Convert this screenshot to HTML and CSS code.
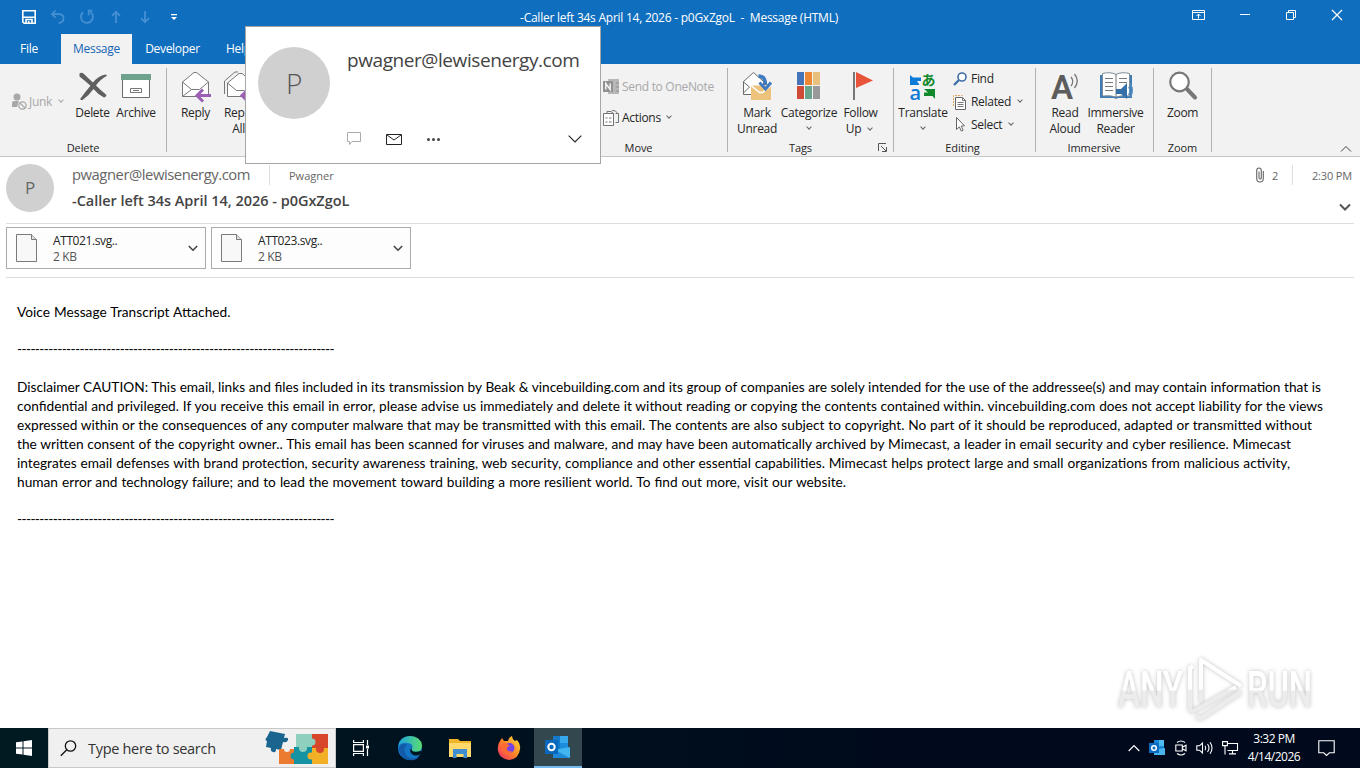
FILE: index.html
```html
<!DOCTYPE html>
<html lang="en">
<head>
  <meta charset="UTF-8">
  <meta name="viewport" content="width=device-width, initial-scale=1.0">
  <title>-Caller left 34s April 14, 2026 - p0GxZgoL - Message (HTML)</title>
  <link rel="stylesheet" href="styles.css">
</head>
<body>

  <div class="window">
    <header class="titlebar">
      <div class="quick-access">
        <svg width="16" height="16" viewBox="0 0 16 16" fill="none" stroke="#fff" stroke-width="1.6"><path d="M1.8 1.8h12.4v12.4H3.2l-1.4-1.4zM2 8.2h12"/><path d="M5 14v-3.5h6V14M7.7 12v2"/></svg>
        <svg width="16" height="16" viewBox="0 0 16 16" fill="none" stroke="#4490d3" stroke-width="1.8"><path d="M5.5 1.5L2 5.2l3.7 3.5M2.2 5.2h6.5c3 0 4.8 1.7 4.8 4.2 0 2.3-1.8 4.2-4.8 4.6"/></svg>
        <svg width="16" height="16" viewBox="0 0 16 16" fill="none" stroke="#4490d3" stroke-width="1.8"><path d="M4 3.3a6 6 0 1 0 7.6-.2M13.5 1.6h-3.8v4.6"/></svg>
        <svg width="16" height="16" viewBox="0 0 16 16" fill="none" stroke="#4490d3" stroke-width="1.8"><path d="M8 14V3M4 6.8L8 2.8l4 4"/></svg>
        <svg width="16" height="16" viewBox="0 0 16 16" fill="none" stroke="#4490d3" stroke-width="1.8"><path d="M8 2v11M4 9.2l4 4 4-4"/></svg>
        <svg width="16" height="16" viewBox="0 0 16 16" fill="#fff"><path d="M5 5h6v1.3H5zM5 8h6l-3 3z"/></svg>
      </div>
      <div class="title">-Caller left 34s April 14, 2026 - p0GxZgoL&nbsp; -&nbsp; Message (HTML)</div>
      <div class="window-buttons">
        <svg width="46" height="30" viewBox="0 0 46 30" fill="none" stroke="#fff"><path d="M16.500 10.500h12v9h-12zM16.500 12.500h12M22.500 18.500v-4M20.500 16l2-2 2 2"/></svg>
        <svg width="46" height="30" viewBox="0 0 46 30" fill="none" stroke="#fff"><path d="M18 14.500h10"/></svg>
        <svg width="46" height="30" viewBox="0 0 46 30" fill="none" stroke="#fff"><path d="M18.500 12.500h7v7h-7zM20.500 12v-1.500h7v7H26"/></svg>
        <svg width="46" height="30" viewBox="0 0 46 30" fill="none" stroke="#fff" stroke-width="1.2"><path d="M18 10l10 10M28 10L18 20"/></svg>
      </div>
    </header>

    <nav class="tabs">
      <span class="tab tab-file">File</span>
      <span class="tab tab-active">Message</span>
      <span class="tab tab-dev">Developer</span>
      <span class="tab tab-help">Help</span>
    </nav>

    <div class="ribbon">
      <section class="group group-delete">
        <div class="tools">
          <div class="junk">
            <svg width="17" height="18" viewBox="0 0 17 18"><circle cx="6" cy="4" r="3.500" fill="#a8a8a8"/><path d="M1 14V10q0-2 2-2h5l-2 6z" fill="#a8a8a8"/><circle cx="11.500" cy="12.500" r="3.700" fill="#f2f2f2" stroke="#a8a8a8" stroke-width="1.300"/><path d="M9 10l5 5" stroke="#a8a8a8" stroke-width="1.300"/></svg>
            <span>Junk</span>
            <i class="caret"></i>
          </div>
          <div class="tool w-delete">
            <svg width="32" height="32" viewBox="0 0 32 32" fill="#5f5f5f"><path d="M2.500 3.500Q4.500 2 7 4q5 5 9 8.500Q21 6 28.500 4.500q2 0 1 1.500-7 4-10.500 9.500 5 5 10.500 9.500-.5 2-2.500 2.500-6-3-10.500-8.500-5 7-11 11-3 .5-2-1.500Q9 21 13.500 15.800 7 10 2.500 6.500z"/></svg>
            <span>Delete</span>
          </div>
          <div class="tool w-archive">
            <svg width="32" height="32" viewBox="0 0 32 32"><path d="M2.500 9.500h27v18h-27z" fill="#fff" stroke="#6b6b6b"/><path d="M1 4h30v6H1z" fill="#6fa28d"/><path d="M10.500 18.500h11v4h-11z" fill="#fff" stroke="#777"/><path d="M13 20.500h6" stroke="#777"/></svg>
            <span>Archive</span>
          </div>
        </div>
        <h2>Delete</h2>
      </section>

      <section class="group group-respond">
        <div class="tools">
          <div class="tool w-reply">
            <svg width="32" height="32" viewBox="0 0 32 32"><path d="M2.500 12L14 2.500h2.500L28.500 12v14.500h-26z" fill="#fff" stroke="#777"/><path d="M2.500 12l9 7.500h8l9-7.500M11.500 19.500l-9 7" fill="none" stroke="#777"/><path d="M31 25.500H17M23 19.500l-6 6 6 6" fill="none" stroke="#9b5fb5" stroke-width="3"/></svg>
            <span>Reply</span>
          </div>
          <div class="tool w-replyall">
            <svg width="32" height="32" viewBox="0 0 32 32"><path d="M1.500 24V11L12 2h3" fill="none" stroke="#777"/><path d="M4.500 13L16 3.500h3L31 13v13.500H4.500z" fill="#fff" stroke="#777"/><path d="M4.500 13l9 7.500h8" fill="none" stroke="#777"/><path d="M31 25.500H19M25 19.500l-6 6 6 6" fill="none" stroke="#9b5fb5" stroke-width="3"/></svg>
            <span>Reply<br>All</span>
          </div>
        </div>
        <h2></h2>
      </section>

      <section class="group group-move">
        <div class="stack">
          <div class="row disabled">
            <svg width="17" height="16" viewBox="0 0 17 16"><path d="M5 0h11v15H5z" fill="#b8b8b8"/><path d="M13 4h3M13 8h3M13 12h3" stroke="#8f8f8f"/><path d="M0 2h10v11H0z" fill="#929292"/><path d="M2.800 10.500v-6l4.400 6v-6" fill="none" stroke="#f2f2f2" stroke-width="1.500"/></svg>
            <span>Send to OneNote</span>
          </div>
          <div class="row">
            <svg width="17" height="16" viewBox="0 0 17 16" fill="none" stroke="#737373"><path d="M.5 3.500h10v12H.5z" fill="#fff"/><path d="M2.500 8h2M2.500 12h2M6 8h2.500M6 12h2.500"/><path d="M4 3V1.500h4l3 2.500M9 .500q5 0 5 3M12.500 12.500h3v-9h-3"/></svg>
            <span>Actions</span>
            <i class="caret"></i>
          </div>
        </div>
        <h2>Move</h2>
      </section>

      <section class="group group-tags">
        <div class="tools">
          <div class="tool w-mark">
            <svg width="32" height="32" viewBox="0 0 32 32"><path d="M2.500 11.500L12.500 2.500l10 9v13h-20z" fill="#fff" stroke="#6b6b6b"/><path d="M2.500 12l6 5-6 6" fill="none" stroke="#6b6b6b"/><path d="M10 15.500h20V30H10z" fill="#ecc27c"/><path d="M10 15.500l8.500 7h3l8.500-7" fill="none" stroke="#fff" stroke-width="1.600"/><path d="M17.500 6q7 0 7 9" fill="none" stroke="#3e7ac1" stroke-width="3.500"/><path d="M18.500 12.500l6 6.500 5.500-6.500" fill="none" stroke="#3e7ac1" stroke-width="3"/></svg>
            <span>Mark<br>Unread</span>
          </div>
          <div class="tool w-cat">
            <svg width="32" height="32" viewBox="0 0 32 32"><path d="M4 2h7v13H4z" fill="#4674b9"/><path d="M12 2h7v13h-7z" fill="#ed8733"/><path d="M20 2h7v13h-7z" fill="#e8c07b"/><path d="M4 16h7v13H4z" fill="#cf4b37"/><path d="M12 16h7v13h-7z" fill="#69a58d"/><path d="M20 16h7v13h-7z" fill="#999"/></svg>
            <span>Categorize</span><i class="caret"></i>
          </div>
          <div class="tool w-follow">
            <svg width="32" height="32" viewBox="0 0 32 32"><path d="M9 2v28" stroke="#777" stroke-width="2"/><path d="M11 2l17 8.500L11 18z" fill="#e8543a"/></svg>
            <span>Follow<br>Up <i class="caret"></i></span>
          </div>
        </div>
        <h2>Tags</h2>
        <svg class="launcher" width="9" height="9" viewBox="0 0 9 9" fill="none" stroke="#555"><path d="M.5 8V.500H8M3 3l5 5M8.500 4v4.500H4"/></svg>
      </section>

      <section class="group group-editing">
        <div class="tools">
          <div class="tool w-translate">
            <svg width="32" height="32" viewBox="0 0 32 32"><text x="14.500" y="15" class="kana">あ</text><text x="2.500" y="30" class="latin">a</text><path d="M3 5l3 2.500h8v3.500h-4l2.500 4H3z" fill="#0a7bd6"/><path d="M17 19h11v10l-2.500-3H17v-3.500h4z" fill="#118a2c"/></svg>
            <span>Translate</span><i class="caret"></i>
          </div>
          <div class="stack">
            <div class="row">
              <svg width="15" height="16" viewBox="0 0 15 16" fill="none" stroke="#3e6fa8"><circle cx="9" cy="6" r="4" fill="#fff" stroke-width="1.600"/><path d="M6 9l-5 5" stroke-width="2.400"/></svg>
              <span>Find</span>
            </div>
            <div class="row">
              <svg width="15" height="16" viewBox="0 0 15 16" fill="none"><path d="M.5 12V1.500h9" stroke="#e5a55c" stroke-dasharray="2 1"/><path d="M2.500 3.500h7l3 3v9h-10z" fill="#fff" stroke="#666"/><path d="M9.500 3.500v3h3M4.500 8.500h6M4.500 10.500h6M4.500 12.500h6" stroke="#777"/></svg>
              <span>Related</span><i class="caret"></i>
            </div>
            <div class="row">
              <svg width="15" height="16" viewBox="0 0 15 16" fill="#fff" stroke="#666"><path d="M3.500 .500v12l2.800-2.600 2 4.200 1.800-.8-1.900-4.200 3.300-.3z"/></svg>
              <span>Select</span><i class="caret"></i>
            </div>
          </div>
        </div>
        <h2>Editing</h2>
      </section>

      <section class="group group-immersive">
        <div class="tools">
          <div class="tool w-read">
            <svg width="32" height="32" viewBox="0 0 32 32"><text x="2" y="29" class="big-a">A</text><path d="M22 7q3.500 4.500 0 9M25.500 4q5.500 7 0 14" fill="none" stroke="#777" stroke-width="1.300"/></svg>
            <span>Read<br>Aloud</span>
          </div>
          <div class="tool w-immersive">
            <svg width="34" height="32" viewBox="0 0 34 32"><path d="M1 5h32v23H19l-2 1-2-1H1z" fill="#3f7cb4"/><path d="M3.500 3.500q8-2 13.500 1 5.500-3 13.500-1V26q-8-1-13.500 1-5.500-2-13.500-1z" fill="#fff" stroke="#7d8d9b"/><path d="M17 4.500V27M6 8.500h8M6 12.500h8M6 16.500h8M6 20.500h8M20 8.500h8M20 12.500h8" stroke="#777" fill="none"/><path d="M17 19h5l6-6v16l-6-5h-5z" fill="#356fa9"/><path d="M29.500 17q2.500 4 0 8M31.500 14q4 6 0 13" fill="none" stroke="#5b92c7" stroke-width="1.200"/></svg>
            <span>Immersive<br>Reader</span>
          </div>
        </div>
        <h2>Immersive</h2>
      </section>

      <section class="group group-zoom">
        <div class="tools">
          <div class="tool w-zoom">
            <svg width="32" height="32" viewBox="0 0 32 32" fill="none" stroke="#777"><path d="M19 18l9 9.500" stroke-width="4" stroke-linecap="round"/><circle cx="12.500" cy="12" r="9.300" fill="#fff" stroke-width="2.200"/></svg>
            <span>Zoom</span>
          </div>
        </div>
        <h2>Zoom</h2>
      </section>

      <svg class="collapse" width="12" height="8" viewBox="0 0 12 8" fill="none" stroke="#444"><path d="M1 6.500l5-5 5 5"/></svg>
    </div>

    <div class="message-header">
      <div class="avatar">P</div>
      <div class="sender">
        <div class="from-line">
          <span class="from">pwagner@lewisenergy.com</span>
          <span class="to">Pwagner</span>
        </div>
        <div class="subject">-Caller left 34s April 14, 2026 - p0GxZgoL</div>
      </div>
      <div class="meta">
        <div class="meta-line">
          <svg width="8" height="16" viewBox="0 0 8 16" fill="none" stroke="#666" stroke-width="1.100"><path d="M7.300 4v7.500q0 3.500-3.300 3.500T.7 11.500V3.500Q.7 1 3 1t2.300 2.500V11q0 1-1.100 1T3 11V4.500"/></svg>
          <span class="count">2</span>
          <span class="time">2:30 PM</span>
        </div>
        <svg width="12" height="8" viewBox="0 0 12 8" fill="none" stroke="#555" stroke-width="2"><path d="M1 1.500l5 5 5-5"/></svg>
      </div>
    </div>

    <div class="attachments">
      <div class="attachment">
        <svg width="22" height="28" viewBox="0 0 22 28" fill="#f8f8f8" stroke="#7a7a7a"><path d="M.5.500h15l5 5v22H.500z"/><path d="M15.500.500v5h5" fill="#ddd"/></svg>
        <div class="file"><span>ATT021.svg..</span><small>2 KB</small></div>
        <svg width="10" height="7" viewBox="0 0 10 7" fill="none" stroke="#444" stroke-width="1.600"><path d="M.8 1L5 5.200 9.200 1"/></svg>
      </div>
      <div class="attachment">
        <svg width="22" height="28" viewBox="0 0 22 28" fill="#f8f8f8" stroke="#7a7a7a"><path d="M.5.500h15l5 5v22H.500z"/><path d="M15.500.500v5h5" fill="#ddd"/></svg>
        <div class="file"><span>ATT023.svg..</span><small>2 KB</small></div>
        <svg width="10" height="7" viewBox="0 0 10 7" fill="none" stroke="#444" stroke-width="1.600"><path d="M.8 1L5 5.200 9.200 1"/></svg>
      </div>
    </div>

    <main class="body">
      <p class="voice">Voice Message Transcript Attached.</p>
      <p class="rule">-----------------------------------------------------------------------</p>
      <p class="disclaimer">
        <span class="l1">Disclaimer CAUTION: This email, links and files included in its transmission by Beak &amp; vincebuilding.com and its group of companies are solely intended for the use of the addressee(s) and may contain information that is</span>
        <span class="l2">confidential and privileged. If you receive this email in error, please advise us immediately and delete it without reading or copying the contents contained within. vincebuilding.com does not accept liability for the views</span>
        <span class="l3">expressed within or the consequences of any computer malware that may be transmitted with this email. The contents are also subject to copyright. No part of it should be reproduced, adapted or transmitted without</span>
        <span class="l4">the written consent of the copyright owner.. This email has been scanned for viruses and malware, and may have been automatically archived by Mimecast, a leader in email security and cyber resilience. Mimecast</span>
        <span class="l5">integrates email defenses with brand protection, security awareness training, web security, compliance and other essential capabilities. Mimecast helps protect large and small organizations from malicious activity,</span>
        <span class="l6">human error and technology failure; and to lead the movement toward building a more resilient world. To find out more, visit our website.</span>
      </p>
      <p class="rule">-----------------------------------------------------------------------</p>
    </main>

    <div class="contact-card">
      <div class="card-avatar">P</div>
      <div class="card-info">
        <div class="card-name">pwagner@lewisenergy.com</div>
        <div class="card-actions">
          <svg width="14" height="14" viewBox="0 0 14 14" fill="none" stroke="#aaa"><path d="M.5.500h13v9H5l-2.500 3v-3h-2z"/></svg>
          <svg width="16" height="11" viewBox="0 0 16 11" fill="none" stroke="#222"><path d="M.5.500h15v10H.500zM1 1l7 5 7-5"/></svg>
          <svg width="13" height="3" viewBox="0 0 13 3" fill="#444"><circle cx="1.500" cy="1.500" r="1.500"/><circle cx="6.500" cy="1.500" r="1.500"/><circle cx="11.500" cy="1.500" r="1.500"/></svg>
          <svg class="more" width="14" height="8" viewBox="0 0 14 8" fill="none" stroke="#222" stroke-width="1.100"><path d="M.7.700L7 7 13.300.700"/></svg>
        </div>
      </div>
    </div>

    <svg class="watermark" width="210" height="76" viewBox="0 0 210 76">
      <defs><linearGradient id="fade" x1="0" y1="0" x2="0" y2="1"><stop offset=".5" stop-color="#fff"/><stop offset=".52" stop-color="#ececec"/></linearGradient></defs>
      <text x="8" y="57" textLength="65" lengthAdjust="spacingAndGlyphs">ANY</text>
      <path d="M83 16l-3 2v42l4 1 42-24M91 52V10l40 26M86 67l5 1 40-26" fill="none" stroke="url(#fade)" stroke-width="4" stroke-linejoin="round"/>
      <text x="137" y="57" textLength="65" lengthAdjust="spacingAndGlyphs">RUN</text>
    </svg>
  </div>

  <footer class="taskbar">
    <div class="start"><svg width="16" height="16" viewBox="0 0 16 16" fill="#fff"><path d="M0 2.300L6.500 1.400V7.500H0zM7.500 1.300L16 0v7.500H7.500zM0 8.500h6.500v6.100L0 13.700zM7.500 8.500H16V16l-8.500-1.300z"/></svg></div>
    <div class="search">
      <svg width="17" height="17" viewBox="0 0 17 17" fill="none" stroke="#111" stroke-width="1.300"><circle cx="10.500" cy="6" r="5.200"/><path d="M6.800 9.700L.8 15.700"/></svg>
      <span>Type here to search</span>
      <svg class="puzzle" width="64" height="36" viewBox="0 0 64 36">
        <path d="M4 1l15 3-1 4q5-1 4 2t-5 2l-2 8-5-1q0 4-3 3t-2-4l-5-1 1-6q-3-1 0-4z" fill="#1a6590"/>
        <path d="M30 4h16v14H30z" fill="#8ed0bd"/><path d="M46 4h16v15H46z" fill="#d8472b"/>
        <path d="M13 19h16v15H13z" fill="#ec7b30"/><path d="M28 17h18v17H28z" fill="#1593a3"/><path d="M46 18h16v16H46z" fill="#f2b027"/>
        <circle cx="46" cy="12" r="3.500" fill="#8ed0bd"/><circle cx="37" cy="18" r="4" fill="#8ed0bd"/><circle cx="28" cy="26" r="3.500" fill="#1593a3"/><circle cx="54" cy="19" r="4" fill="#d8472b"/><circle cx="45" cy="26" r="3.500" fill="#f2b027"/><circle cx="21" cy="19" r="3" fill="#f0f0f0"/>
      </svg>
    </div>
    <div class="task"><svg width="18" height="16" viewBox="0 0 18 16" fill="none" stroke="#fff" stroke-width="1.200"><path d="M1.600 4.600h9.800v6.800H1.600zM1.600 0v2.500h9.800V0M1.600 16v-2.500h9.800V16M15.500 0v5M15.500 9v7"/><path d="M14 5.500h3v3h-3z" fill="#fff" stroke="none"/></svg></div>
    <div class="task">
      <svg width="24" height="24" viewBox="0 0 24 24"><defs><linearGradient id="edge-top" x1="0" x2="1"><stop offset="0" stop-color="#1ba4dd"/><stop offset="1" stop-color="#5cdc72"/></linearGradient></defs><circle cx="12" cy="12" r="12" fill="#1474c4"/><path d="M.3 10Q2 0 12 0q11 .5 12 9.500 0 6-6 6.500-5 0-4-3 2-5-4-6Q4 6 .3 10z" fill="url(#edge-top)"/><path d="M9 8.500Q4 13 8 19t13 2q-4 4-10 3Q2 22 1 13 3 6 9 8.500z" fill="#125aa8"/><path d="M13.500 12q-3 3 .5 6t9 0l.5-3.500q-4 2-8 1-2.500-1-2-3.500z" fill="#00161f"/></svg>
    </div>
    <div class="task">
      <svg width="22" height="20" viewBox="0 0 22 20"><path d="M0 1h9l2 2h11v16H0z" fill="#f0b429"/><path d="M0 5h22v14H0z" fill="#ffd96b"/><path d="M4 20v-9h14v9h-3.500v-4h-7v4z" fill="#3f8ed0"/></svg>
    </div>
    <div class="task">
      <svg width="24" height="24" viewBox="0 0 24 24"><defs><linearGradient id="fox" x1="1" y1="0" x2="0" y2="1"><stop offset="0" stop-color="#ffe33f"/><stop offset=".5" stop-color="#ff8527"/><stop offset="1" stop-color="#f0246c"/></linearGradient></defs><path d="M3 5l2-3 2 3h4q1-4 4-5 0 3 3 5l2-1q4 4 3 9-1 10-11 11Q3 23 1 15 0 9 3 5z" fill="url(#fox)"/><circle cx="12.500" cy="12" r="5" fill="#7542e5"/><path d="M5 8q4-2 8 2-2 0-3 2-1 4 5 3-3 5-8 2-4-3-2-9z" fill="#ff6b32"/></svg>
    </div>
    <div class="task task-active">
      <svg width="26" height="24" viewBox="0 0 26 24"><path d="M8 1h15v17H8z" fill="#1378c9"/><path d="M15 1h8v7h-8z" fill="#35a9ec"/><path d="M15 8h8v6h-8z" fill="#1b8bdb"/><path d="M8 15l17-3v11H8z" fill="#42b4ee"/><path d="M8 14l17 9H8z" fill="#1e8bd8"/><path d="M0 5h13v14H0z" fill="#0868bd"/><circle cx="6.500" cy="12" r="3.200" fill="none" stroke="#fff" stroke-width="2"/></svg>
    </div>
    <div class="tray">
      <svg width="12" height="8" viewBox="0 0 12 8" fill="none" stroke="#fff" stroke-width="1.200"><path d="M.7 7L6 1.500 11.300 7"/></svg>
      <svg width="16" height="16" viewBox="0 0 16 16"><path d="M5 0h10v12H5z" fill="#1a85d6"/><path d="M10 0h5v6h-5z" fill="#4dbcf1"/><path d="M5 10l11-2v7H5z" fill="#49b5ee"/><path d="M0 3h10v10H0z" fill="#0b6cc0"/><circle cx="5" cy="8" r="2.300" fill="none" stroke="#fff" stroke-width="1.500"/></svg>
      <svg width="12" height="16" viewBox="0 0 12 16" fill="none" stroke="#fff" stroke-width="1.100"><path d="M2 2.500q4-3 8 0M2 13.500q4 3 8 0M.8 5h6.500v6H.800zM7.300 7.200L11 5.200v5.600L7.300 8.800"/></svg>
      <svg width="17" height="14" viewBox="0 0 17 14" fill="none" stroke="#fff" stroke-width="1.100"><path d="M.8 4.800h2.700L6.500 2v10L3.500 9.200H.800zM9 4.800q1.600 2.200 0 4.400M11.500 3q3 4 0 8M14 1.300q4 5.700 0 11.400"/></svg>
      <svg width="17" height="14" viewBox="0 0 17 14" fill="none" stroke="#fff" stroke-width="1.100"><path d="M5.500 2.500h10v7h-10M10.500 9.500v3M7 12.900h7M.6.600h4.800v4H.600zM3 4.600v8.800"/></svg>
    </div>
    <div class="clock"><span>3:32 PM</span><span>4/14/2026</span></div>
    <svg class="notify" width="17" height="17" viewBox="0 0 17 17" fill="none" stroke="#fff" stroke-width="1.100"><path d="M.8.800h15.400v12h-4.800L8.500 15.500l-2.700-2.700h-5z"/></svg>
  </footer>

</body>
</html>
```
FILE: styles.css
```css
* {
  box-sizing: border-box;
}

body {
  width: 1360px;
  height: 768px;
  margin: 0;
  overflow: hidden;
  background: #fff;
  color: #262626;
  font-family: "Open Sans", "Noto Sans", "Noto Sans CJK JP", sans-serif;
  font-size: 12px;
  letter-spacing: -0.3px;
}

svg {
  display: block;
  flex: none;
  overflow: visible;
}

.window {
  position: relative;
  height: 728px;
}

/* title bar */
.titlebar {
  display: grid;
  grid-template-columns: 506px 346px 1fr;
  height: 34px;
  background: #106ebe;
  color: #fff;
}

.quick-access {
  display: flex;
  gap: 13px;
  padding: 9px 0 0 21px;
}

.title {
  letter-spacing: -0.25px;
  line-height: 35px;
  text-align: center;
  white-space: pre;
}

.window-buttons {
  display: flex;
  justify-content: flex-end;
}

.tabs {
  display: flex;
  height: 30px;
  background: #106ebe;
  color: #fff;
  line-height: 30px;
}

.tab {
  text-align: center;
}

.tab-file {
  width: 58px;
  margin-right: 3px;
}

.tab-active {
  width: 71px;
  background: #f2f2f2;
  color: #1565b4;
}

.tab-dev {
  width: 81px;
}

.tab-help {
  padding-left: 13px;
}

/* ribbon */
.ribbon {
  position: relative;
  display: flex;
  height: 93px;
  padding-top: 4px;
  background: #f2f2f2;
  border-bottom: 1px solid #c6c6c6;
}

.group {
  position: relative;
  display: flex;
  flex-direction: column;
  justify-content: space-between;
  height: 84px;
  border-right: 1px solid #b1b1b1;
}

.group h2 {
  height: 10px;
  margin: 0;
  font-size: 11px;
  font-weight: normal;
  letter-spacing: -0.1px;
  line-height: 12px;
  text-align: center;
}

.group-delete { width: 167px; }
.group-respond { width: 383px; padding-left: 8px; }
.group-move { width: 178px; }
.group-tags { width: 166px; padding-left: 4px; }
.group-editing { width: 142px; padding-left: 3px; }
.group-immersive { width: 118px; padding-left: 5px; }
.group-zoom { width: 58px; }

.group-tags h2 { padding-right: 24px; }
.group-editing h2 { padding-right: 7px; }
.group-immersive h2 { padding-right: 6px; }

.tools {
  display: flex;
}

.tool {
  display: flex;
  flex-direction: column;
  align-items: center;
  height: 64px;
  padding-top: 2px;
  line-height: 16px;
  text-align: center;
  white-space: nowrap;
}

.tool span {
  padding-top: 3px;
}

.w-delete { width: 41px; }
.w-archive { width: 46px; }
.w-reply { width: 41px; }
.w-replyall { width: 45px; }
.w-mark { width: 50px; }
.w-cat { width: 54px; }
.w-follow { width: 49px; }
.w-translate { width: 52px; }
.w-read { width: 48px; }
.w-immersive { width: 53px; }
.w-zoom { width: 57px; }

.caret {
  display: inline-block;
  width: 4px;
  height: 4px;
  margin: 0 3px 3px 4px;
  border: solid #666;
  border-width: 0 1px 1px 0;
  transform: rotate(45deg);
}

.tool > .caret {
  margin: 4px 0 0;
}

.junk {
  display: flex;
  align-items: center;
  width: 72px;
  height: 64px;
  padding: 3px 0 0 11px;
  color: #a8a8a8;
}

.junk span {
  width: 27px;
  padding-left: 1px;
}

.junk .caret {
  border-color: #a8a8a8;
}

.stack {
  display: flex;
  flex-direction: column;
}

.row {
  display: flex;
  align-items: center;
  height: 23px;
  gap: 2px;
  white-space: nowrap;
}

.group-move .stack {
  gap: 8px;
  padding: 7px 0 0 53px;
}

.group-editing .stack {
  margin-top: -1px;
  padding-left: 4px;
}

.group-editing .row {
  gap: 3px;
}

.disabled {
  color: #a8a8a8;
}

.launcher {
  position: absolute;
  right: 6px;
  bottom: 0;
}

.collapse {
  position: absolute;
  right: 8px;
  bottom: 3px;
}

.kana {
  fill: #118a2c;
  font: bold 14px "Noto Sans CJK JP", sans-serif;
}

.latin {
  fill: #0a7bd6;
  font: 600 20px "Open Sans", sans-serif;
}

.big-a {
  fill: #5c5c5c;
  font: 600 33px Roboto, sans-serif;
}

/* message header */
.message-header {
  display: flex;
  height: 67px;
  margin: 0 6px;
  border-bottom: 1px solid #dedede;
}

.avatar {
  width: 48px;
  height: 48px;
  margin: 7px 18px 0 0;
  border-radius: 50%;
  background: #d0d0d0;
  color: #666;
  font-size: 17px;
  line-height: 48px;
  text-align: center;
}

.sender {
  padding-top: 8px;
}

.from-line {
  display: flex;
  height: 20px;
  line-height: 20px;
}

.from {
  width: 198px;
  border-right: 1px solid #dedede;
  color: #666;
  font-size: 14.8px;
  letter-spacing: -0.46px;
  line-height: 19px;
}

.to {
  padding-left: 19px;
  color: #666;
  font-size: 11px;
  letter-spacing: 0;
  line-height: 22px;
}

.subject {
  color: #444;
  font-size: 14.5px;
  font-weight: 600;
  letter-spacing: -0.03px;
  line-height: 32px;
}

.meta {
  display: flex;
  flex-direction: column;
  align-items: flex-end;
  margin-left: auto;
  padding-top: 8px;
  color: #666;
  font-size: 11px;
}

.meta > svg {
  margin: 18px 3px 0 0;
}

.meta-line {
  display: flex;
  height: 20px;
  margin-right: 2px;
  line-height: 21px;
}

.meta-line svg {
  margin-top: 2px;
}

.count {
  width: 29px;
  padding-left: 8px;
  border-right: 1px solid #dedede;
}

.time {
  padding-left: 19px;
  letter-spacing: -0.15px;
}

.attachments {
  display: flex;
  gap: 5px;
  height: 54px;
  margin: 0 6px;
  padding-top: 3px;
  border-bottom: 1px solid #dedede;
}

.attachment {
  display: flex;
  align-items: center;
  width: 200px;
  height: 42px;
  padding: 0 7px 0 9px;
  border: 1px solid #ababab;
  background: #fdfdfd;
}

.file {
  display: flex;
  flex: 1;
  flex-direction: column;
  padding: 2px 0 0 15px;
  letter-spacing: -0.4px;
  line-height: 16px;
}

.file small {
  color: #555;
  font-size: 12px;
}

/* message text */
.body {
  padding: 24px 17px 0;
  color: #000;
  font-family: Lato, sans-serif;
  font-size: 13.7px;
  letter-spacing: 0;
  line-height: 19px;
}

.body p {
  margin: 0 0 18px;
  white-space: nowrap;
}

.voice {
  word-spacing: 0.6px;
}

.rule {
  letter-spacing: -0.62px;
}

.body .disclaimer {
  margin: 19px 0 18px;
}

.disclaimer span {
  display: block;
  text-align-last: justify;
}

.l1 { width: 1304px; }
.l2 { width: 1306px; }
.l3 { width: 1295px; }
.l4 { width: 1274px; }
.l5 { width: 1273px; }
.l6 { width: 829px; }

/* contact card */
.contact-card {
  position: absolute;
  top: 26px;
  left: 245px;
  display: flex;
  width: 356px;
  height: 138px;
  padding: 20px 18px 0 12px;
  border: 1px solid #a6a6a6;
  background: #fff;
}

.card-avatar {
  width: 72px;
  height: 72px;
  border-radius: 50%;
  background: #d0d0d0;
  color: #555;
  font-size: 28px;
  font-weight: 300;
  line-height: 72px;
  text-align: center;
}

.card-info {
  flex: 1;
  padding-left: 17px;
}

.card-name {
  height: 84px;
  color: #444;
  font-size: 19px;
  letter-spacing: -0.42px;
  line-height: 26px;
}

.card-actions {
  display: flex;
  align-items: center;
  gap: 25px;
  height: 16px;
}

.more {
  margin-left: auto;
}

.watermark {
  position: absolute;
  top: 650px;
  left: 1110px;
  filter: drop-shadow(0 0 2px rgba(0, 0, 0, 0.25));
}

.watermark text {
  fill: url(#fade);
  font: 500 50px Roboto, sans-serif;
}

/* taskbar */
.taskbar {
  display: flex;
  align-items: center;
  height: 40px;
  background: linear-gradient(90deg, #001a22, #000a1c 65%);
  color: #fff;
}

.start {
  width: 48px;
  padding-left: 16px;
}

.search {
  display: flex;
  align-items: center;
  width: 288px;
  height: 40px;
  padding-left: 11px;
  border: 1px solid #c8c8c8;
  background: #f0f0f0;
  color: #333;
}

.search span {
  width: 189px;
  padding-left: 11px;
  font-size: 14.5px;
}

.task {
  display: flex;
  align-items: center;
  justify-content: center;
  width: 49.5px;
  height: 40px;
}

.task-active {
  width: 48px;
  border-bottom: 2px solid #76b9ed;
  background: #33474f;
}

.tray {
  display: flex;
  align-items: center;
  gap: 9px;
  margin-left: auto;
}

.tray svg:nth-child(3) {
  margin-left: 1px;
}

.clock {
  display: flex;
  flex-direction: column;
  align-items: center;
  width: 70px;
  letter-spacing: -0.5px;
  line-height: 18px;
}

.notify {
  margin: 1px 25px 0 9px;
}
```
